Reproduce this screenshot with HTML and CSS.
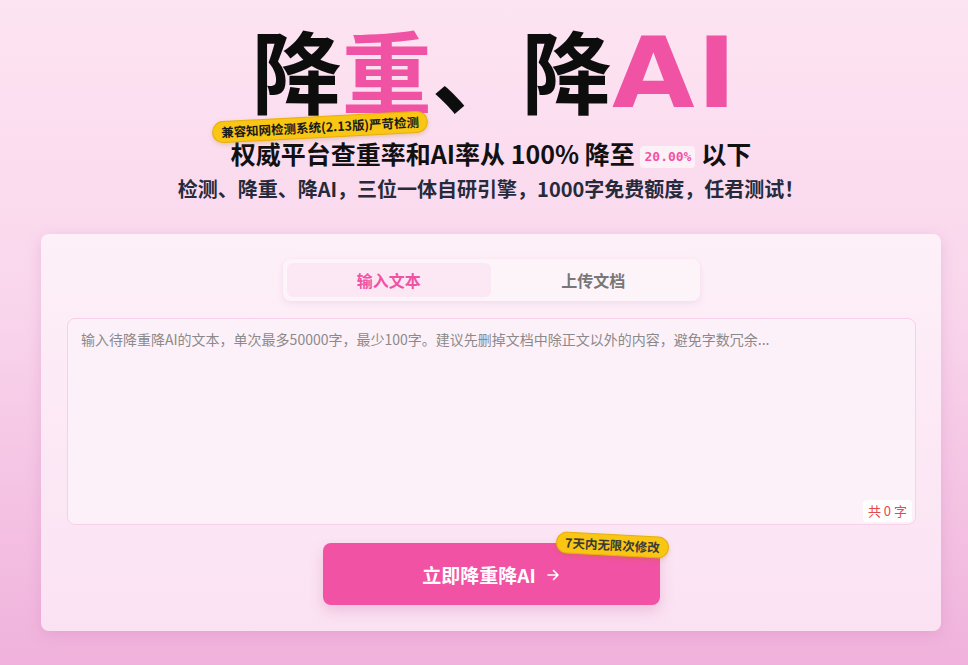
FILE: index.html
```html
<!DOCTYPE html>
<html lang="zh-CN">
<head>
    <meta charset="UTF-8">
    <meta name="viewport" content="width=device-width, initial-scale=1.0">
    <title>降重、降AI</title>
    <link rel="stylesheet" href="styles.css">
</head>
<body>
    <div class="hero">
        <h1 class="title">降<span class="pink">重</span>、降<span class="pink latin">AI</span></h1>
        <span class="tag tag-hero">兼容知网检测系统(2.13版)严苛检测</span>
        <p class="lead">权威平台查重率和AI率从 100% 降至 <span class="rate">20.00%</span> 以下</p>
        <p class="sub">检测、降重、降AI，三位一体自研引擎，1000字免费额度，任君测试！</p>
    </div>

    <div class="card">
        <div class="tabs">
            <div class="tab active">输入文本</div>
            <div class="tab">上传文档</div>
        </div>

        <div class="editor">
            <textarea placeholder="输入待降重降AI的文本，单次最多50000字，最少100字。建议先删掉文档中除正文以外的内容，避免字数冗余..."></textarea>
            <span class="count">共 0 字</span>
        </div>

        <div class="actions">
            <button class="submit">
                立即降重降AI
                <svg width="14" height="14" viewBox="0 0 14 14" fill="none" stroke="currentColor" stroke-width="1.6" stroke-linecap="round" stroke-linejoin="round"><path d="M2 7h10M7.5 2.5 12 7l-4.5 4.5"/></svg>
                <span class="tag tag-btn">7天内无限次修改</span>
            </button>
        </div>
    </div>
</body>
</html>
```

FILE: styles.css
```css
body {
    margin: 0;
    min-height: 665px;
    font-family: "Noto Sans CJK SC", "Noto Sans", sans-serif;
    color: #111;
    background: linear-gradient(180deg, #fde4f2 0%, #f9d6ec 45%, #f0b2dc 100%);
}
.hero {
    position: relative;
    width: 900px;
    margin-left: 41px;
    padding-top: 22px;
    text-align: center;
}
.title {
    height: 92px;
    margin: 0;
    font-size: 90px;
    line-height: 92px;
    font-weight: 700;
    color: #0d0d0d;
}
.pink {
    color: #f153a4;
}
.latin {
    display: inline-block;
    margin-right: 2px;
    font-family: "DejaVu Sans", sans-serif;
    font-weight: bold;
    font-size: 98px;
    line-height: 0;
    letter-spacing: 2px;
    transform: scaleX(1.09);
    transform-origin: left center;
}
.lead {
    margin: 23px 0 0;
    font-size: 25px;
    line-height: 32px;
    font-weight: bold;
    color: #111;
}
.rate {
    display: inline-block;
    padding: 0 4px;
    font-family: "DejaVu Sans Mono", "Liberation Mono", monospace;
    font-size: 13px;
    line-height: 22px;
    color: #f153a4;
    background: #fdf1f8;
    border-radius: 4px;
    vertical-align: 3px;
}
.sub {
    margin: 6px 0 0;
    font-size: 20px;
    line-height: 28px;
    font-weight: bold;
    color: #262a3a;
}
.tag {
    position: absolute;
    padding: 0 8px;
    font-size: 12.5px;
    line-height: 20px;
    font-weight: bold;
    white-space: nowrap;
    background: #f9c614;
    border: 1px solid #e8ae0c;
    border-radius: 12px;
    box-shadow: 0 2px 4px rgba(180, 120, 0, 0.25);
}
.tag-hero {
    left: 171px;
    top: 116px;
    color: #1a1a1a;
    transform: rotate(-3deg);
}
.card {
    width: 850px;
    margin: 31px 0 0 41px;
    padding: 25px 25px 26px 25px;
    background: linear-gradient(180deg, #fdf0f8 0%, #fbe2f3 100%);
    border-radius: 8px;
    box-shadow: 0 4px 14px rgba(200, 110, 170, 0.25);
}
.tabs {
    display: flex;
    width: 409px;
    margin: 0 auto;
    padding: 4px;
    background: #fdf4fa;
    border-radius: 8px;
    box-shadow: 0 2px 6px rgba(210, 140, 190, 0.2);
}
.tab {
    flex: 1;
    height: 34px;
    line-height: 34px;
    text-align: center;
    font-size: 16px;
    font-weight: bold;
    color: #777;
    border-radius: 6px;
}
.tab.active {
    color: #f153a4;
    background: #fce8f4;
}
.editor {
    position: relative;
    margin-top: 17px;
    margin-left: 1px;
}
textarea {
    display: block;
    box-sizing: border-box;
    width: 849px;
    height: 207px;
    padding: 10px 13px;
    font-family: "Noto Sans CJK SC", "Noto Sans", sans-serif;
    font-size: 14px;
    line-height: 20px;
    color: #333;
    background: #fdf1f9;
    border: 1px solid #f8d0e7;
    border-radius: 8px;
    resize: none;
    outline: none;
}
textarea::placeholder {
    color: #8a8a8a;
}
.count {
    position: absolute;
    right: 4px;
    bottom: 3px;
    padding: 0 5px;
    font-size: 13px;
    line-height: 22px;
    color: #e5484d;
    background: #fff;
    border-radius: 4px;
}
.actions {
    display: flex;
    justify-content: center;
    margin-top: 18px;
}
.submit {
    position: relative;
    display: flex;
    align-items: center;
    justify-content: center;
    gap: 10px;
    width: 337px;
    height: 62px;
    padding-top: 2px;
    font-family: "Noto Sans CJK SC", "Noto Sans", sans-serif;
    font-size: 19px;
    font-weight: bold;
    color: #fff;
    background: #f252a3;
    border: none;
    border-radius: 8px;
    box-shadow: 0 6px 14px rgba(200, 90, 150, 0.25);
    cursor: pointer;
}
.tag-btn {
    right: -9px;
    top: -9px;
    color: #3a3a3a;
    transform: rotate(3deg);
}
```
